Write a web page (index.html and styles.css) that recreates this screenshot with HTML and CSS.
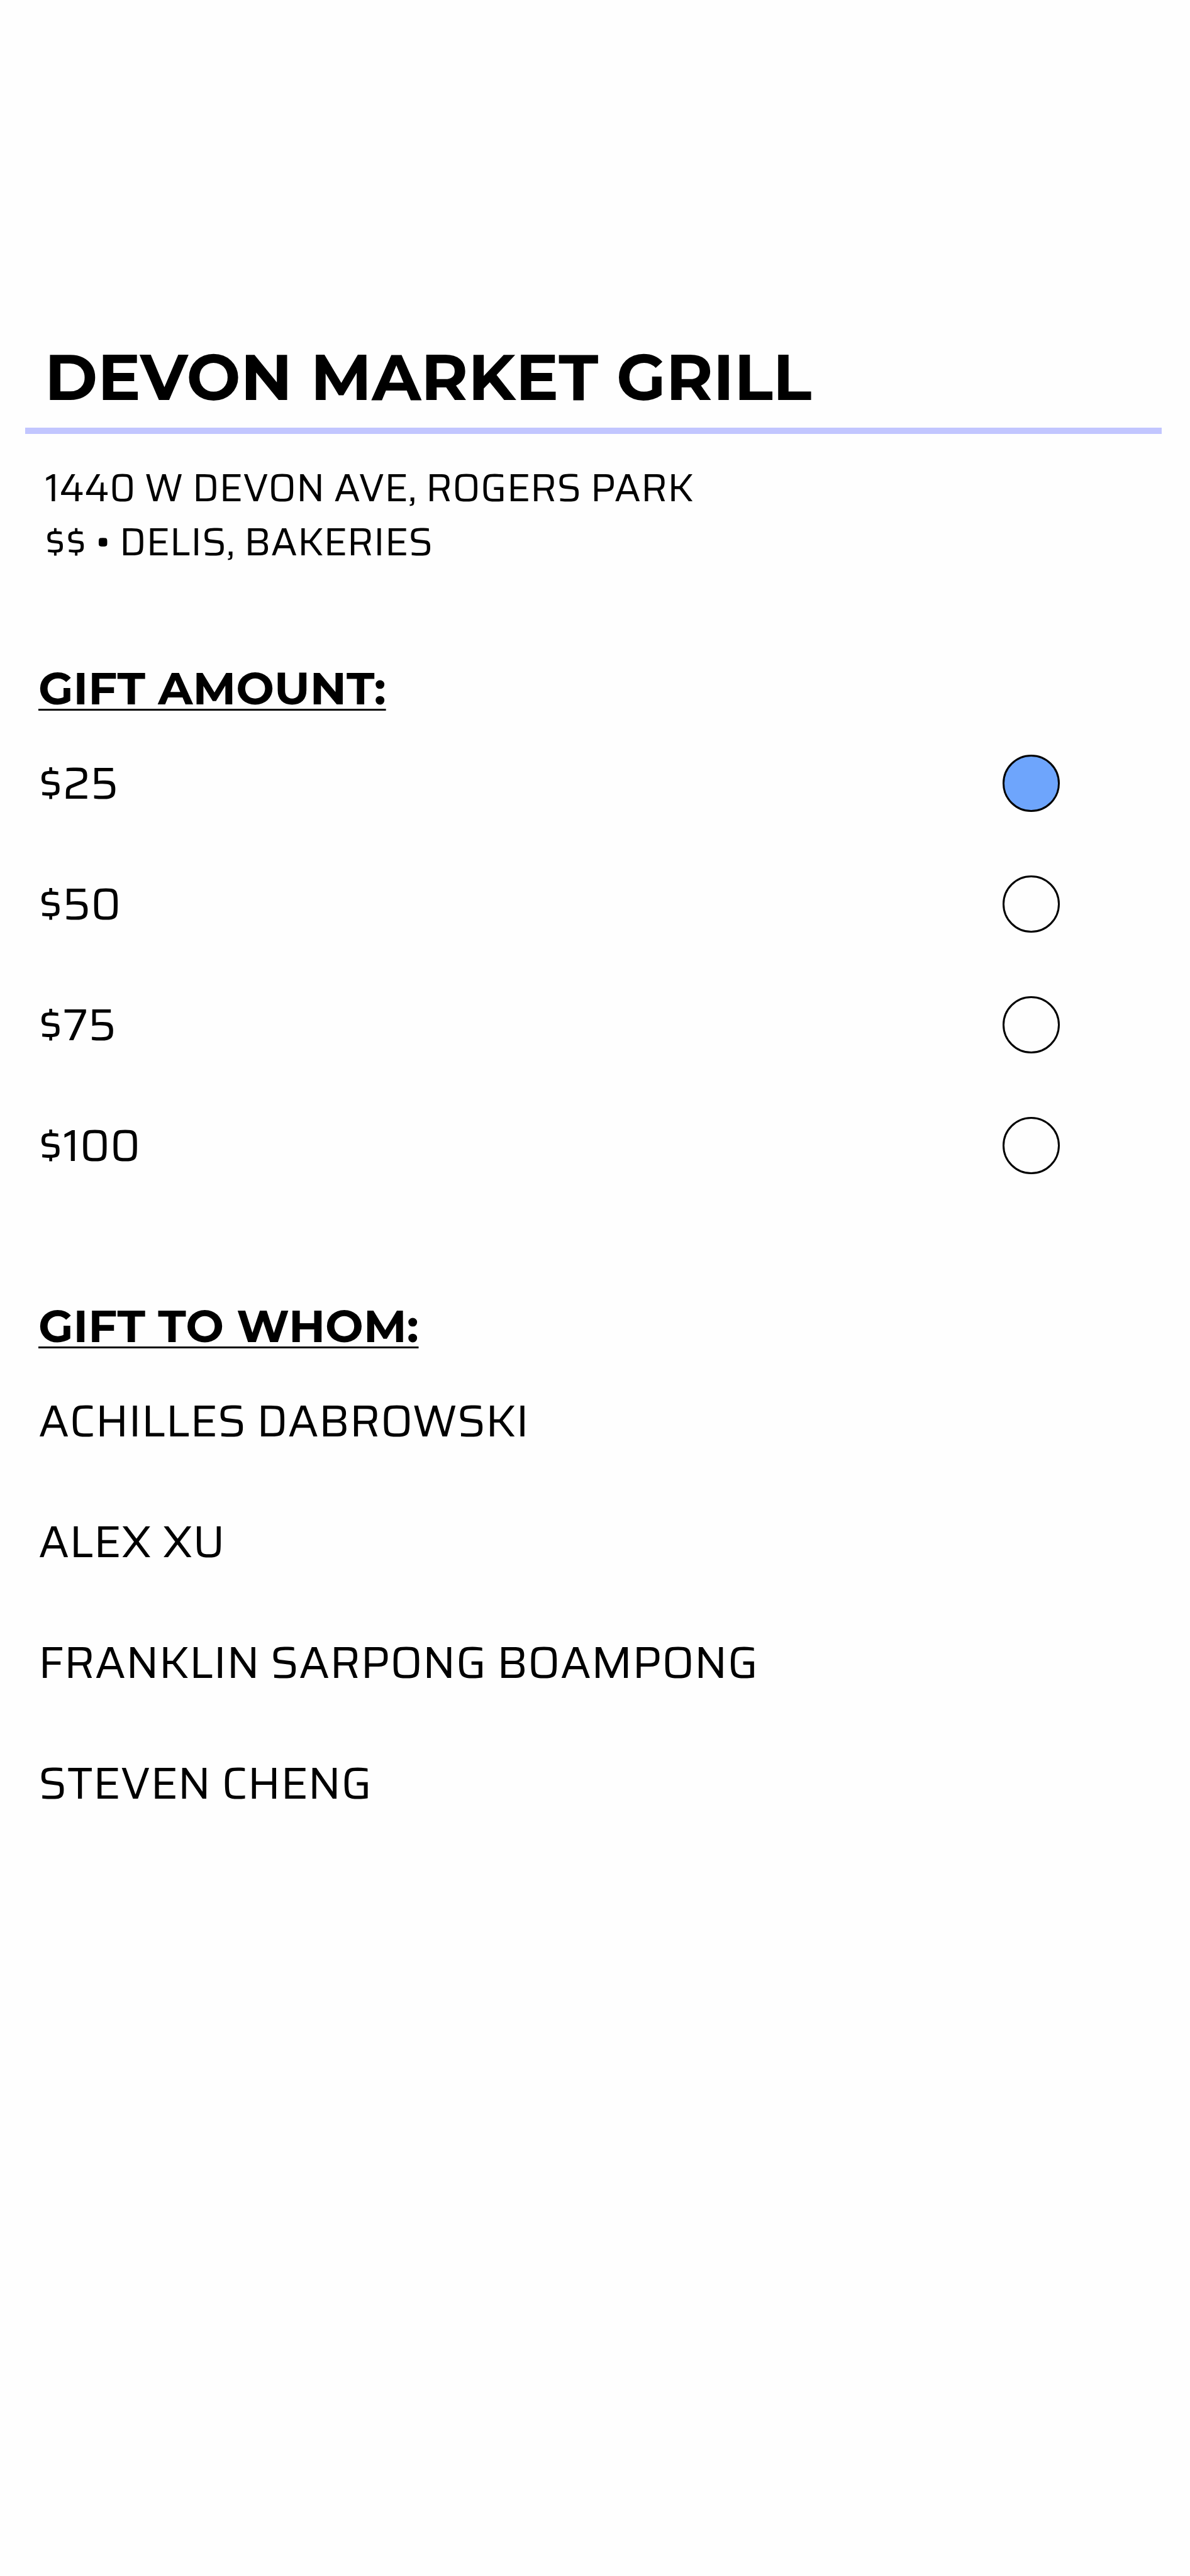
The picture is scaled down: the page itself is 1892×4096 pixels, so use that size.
FILE: index.html
```html
<!DOCTYPE html>
<html lang="en">
<head>
  <meta charset="utf-8">
  <meta name="viewport" content="width=device-width, initial-scale=1">
  <title>Devon Market Grill</title>
  <link rel="stylesheet" href="styles.css">
</head>
<body>
  <main class="page">
    <header class="store">
      <h1 class="store-name">DEVON MARKET GRILL</h1>
      <div class="store-info">
        <p>1440 W DEVON AVE, ROGERS PARK</p>
        <p>$$ • DELIS, BAKERIES</p>
      </div>
    </header>
    <form class="gift">
      <section class="group" role="radiogroup" aria-labelledby="amount-title">
        <h2 class="group-title" id="amount-title">GIFT AMOUNT:</h2>
        <label class="row"><span>$25</span><input class="radio" type="radio" name="amount" value="25" checked></label>
        <label class="row"><span>$50</span><input class="radio" type="radio" name="amount" value="50"></label>
        <label class="row"><span>$75</span><input class="radio" type="radio" name="amount" value="75"></label>
        <label class="row"><span>$100</span><input class="radio" type="radio" name="amount" value="100"></label>
      </section>
      <section class="group">
        <h2 class="group-title">GIFT TO WHOM:</h2>
        <ul class="people">
          <li class="row">ACHILLES DABROWSKI</li>
          <li class="row">ALEX XU</li>
          <li class="row">FRANKLIN SARPONG BOAMPONG</li>
          <li class="row">STEVEN CHENG</li>
        </ul>
      </section>
    </form>
  </main>
</body>
</html>
```

FILE: styles.css
```css
* {
  box-sizing: border-box;
  margin: 0;
  padding: 0;
}

body {
  background: #fefefe;
  color: #000;
  font-family: "Saira", "Inter", sans-serif;
}

.page {
  min-height: 100vh;
  padding-top: 540px;
}

.store-name {
  margin: 0 45px 0 40px;
  padding: 0 31px 20px;
  border-bottom: 10px solid #c2c6ff;
  font: 700 102px/120px "Montserrat", "Inter", sans-serif;
}

.store-info {
  padding: 43px 71px 0;
  font-size: 62px;
  line-height: 86px;
}

.gift {
  display: flex;
  flex-direction: column;
  gap: 147px;
  padding: 145px 207px 0 61px;
}

.group-title {
  margin-bottom: 11px;
  font: 700 72px/88px "Montserrat", "Inter", sans-serif;
  text-decoration: underline;
  text-decoration-thickness: 3px;
  text-underline-offset: 7px;
  text-decoration-skip-ink: none;
}

.people {
  list-style: none;
}

.row {
  display: flex;
  align-items: center;
  justify-content: space-between;
  height: 192px;
  font-size: 72px;
}

.radio {
  appearance: none;
  width: 91px;
  height: 91px;
  border: 3px solid #000;
  border-radius: 50%;
}

.radio:checked {
  background: #6ea5fc;
}
```
